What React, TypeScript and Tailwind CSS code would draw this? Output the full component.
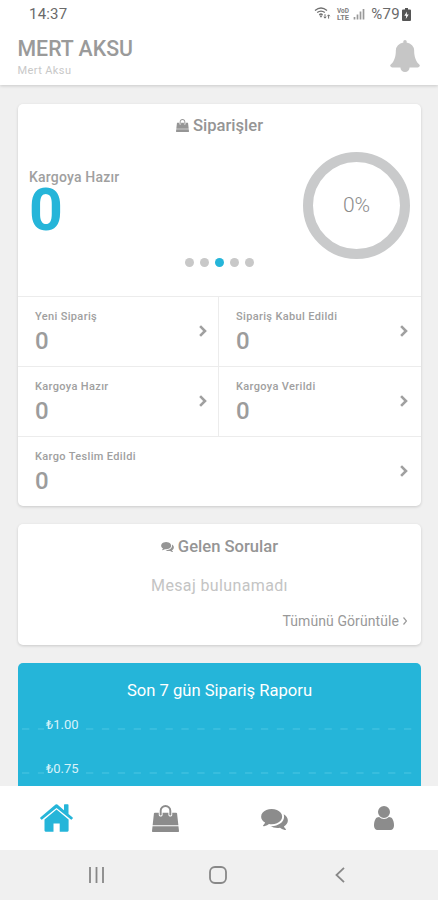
import type { ReactNode } from 'react';
import clsx from 'clsx';

const HomeIcon = ({ className }: { className?: string }) => (
  <svg viewBox="0 0 33 28" fill="currentColor" className={className}>
    <path d="M0.3 13.6 15.6 0.6Q16.5 0 17.4 0.6L24 6.2V1Q24 0.3 24.7 0.3H27.8Q28.5 0.3 28.5 1V10L32.7 13.6Q33 14 32.7 14.4L31.7 15.6Q31.3 15.9 30.9 15.6L16.5 3.9 2.1 15.6Q1.7 15.9 1.3 15.6L0.3 14.4Q0 14 0.3 13.6Z" />
    <path d="M16.5 5.4 28.6 15.4V26.6Q28.6 27.7 27.5 27.7H19.7V19.4H13.5V27.7H5.6Q4.5 27.7 4.5 26.6V15.4Z" />
  </svg>
);

const BagIcon = ({ className }: { className?: string }) => (
  <svg viewBox="0 0 1792 1792" fill="currentColor" className={className}>
    <path d="M1757 1408l35 313q3 28-16 50-19 21-48 21h-1664q-29 0-48-21-19-22-16-50l35-313h1722zm-93-839l86 775h-1708l86-775q3-24 21-40.5t43-16.5h256v128q0 53 37.5 90.5t90.5 37.5 90.5-37.5 37.5-90.5v-128h384v128q0 53 37.5 90.5t90.5 37.5 90.5-37.5 37.5-90.5v-128h256q25 0 43 16.5t21 40.5zm-384-185v256q0 26-19 45t-45 19-45-19-19-45v-256q0-106-75-181t-181-75-181 75-75 181v256q0 26-19 45t-45 19-45-19-19-45v-256q0-159 112.5-271.5t271.5-112.5 271.5 112.5 112.5 271.5z" />
  </svg>
);

const CommentsIcon = ({ className }: { className?: string }) => (
  <svg viewBox="0 256 1792 1408" fill="currentColor" className={className}>
    <path d="M1408 768q0 139-94 257t-256.5 186.5-353.5 68.5q-86 0-176-16-124 88-278 128-36 9-86 16h-3q-11 0-20.5-8t-11.5-21q-1-3-1-6.5t.5-6.5 2-6l2.5-5 3.5-5.5 4-5 4.5-5 4-4.5q5-6 23-25t26-29.5 22.5-29 25-38.5 20.5-44q-124-72-195-177t-71-224q0-139 94-257t256.5-186.5 353.5-68.5 353.5 68.5 256.5 186.5 94 257zm384 256q0 120-71 224.5t-195 176.5q10 24 20.5 44t25 38.5 22.5 29 26 29.5 23 25q1 1 4 4.5t4.5 5 4 5 3.5 5.5l2.5 5 2 6 .5 6.5-1 6.5q-3 14-13 22t-22 7q-50-7-86-16-154-40-278-128-90 16-176 16-271 0-472-132 58 4 88 4 161 0 309-45t264-129q125-92 192-212t67-254q0-77-23-152 129 71 204 178t75 230z" />
  </svg>
);

const UserIcon = ({ className }: { className?: string }) => (
  <svg viewBox="256 128 1280 1536" fill="currentColor" className={className}>
    <path d="M1536 1399q0 109-62.5 187t-150.5 78h-854q-88 0-150.5-78t-62.5-187q0-85 8.5-160.5t31.5-152 58.5-131 94-89 134.5-34.5q131 128 313 128t313-128q76 0 134.5 34.5t94 89 58.5 131 31.5 152 8.5 160.5zm-256-887q0 159-112.5 271.5t-271.5 112.5-271.5-112.5-112.5-271.5 112.5-271.5 271.5-112.5 271.5 112.5 112.5 271.5z" />
  </svg>
);

const BellIcon = ({ className }: { className?: string }) => (
  <svg viewBox="64 0 1664 1792" fill="currentColor" className={className}>
    <path d="M1728 1408q0 52-38 90t-90 38h-448q0 106-75 181t-181 75-181-75-75-181h-448q-52 0-90-38t-38-90q50-42 91-88t85-119.5 74.5-158.5 50-206 19.5-260q0-152 117-282.5t307-158.5q-8-19-8-39 0-40 28-68t68-28 68 28 28 68q0 20-8 39 190 28 307 158.5t117 282.5q0 139 19.5 260t50 206 74.5 158.5 85 119.5 91 88z" />
  </svg>
);

const ChevronIcon = () => (
  <svg viewBox="0 0 8 12" fill="none" stroke="currentColor" strokeWidth="2.6" className="mt-0.5 h-3 w-2 text-[#a0a0a0]">
    <path d="M1.1 1.1 6 6 1.1 10.9" />
  </svg>
);

const StatusIcons = () => (
  <svg viewBox="0 0 52 14" className="h-3.5 w-[52px]" fill="none" stroke="#6f6f6f">
    {/* wifi */}
    <path d="M1 3.4Q7 -1.4 13 3.4M3.2 5.6Q7 2.6 10.8 5.6M5.2 7.7Q7 6.2 8.6 7.7" strokeWidth="1.3" />
    <path d="M7 10.8 5.4 8.4H8.6Z" fill="#6f6f6f" stroke="none" />
    <path d="M11 7.2V11M9.8 9.8 11 11.2 12.2 9.8M14.6 11.6V8M13.4 9.2 14.6 7.8 15.8 9.2" strokeWidth="1" />
    {/* volte */}
    <g fill="#808080" stroke="none" fontFamily="Roboto, sans-serif" fontSize="6.5" fontWeight="700">
      <text x="23" y="6" textLength="12" lengthAdjust="spacingAndGlyphs">VoD</text>
      <text x="23" y="12.6" textLength="12" lengthAdjust="spacingAndGlyphs">LTE</text>
    </g>
    {/* signal */}
    <path d="M40.5 12.5V10M43.5 12.5V7.5M46.5 12.5V4.5M49.5 12.5V2" stroke="#999999" strokeWidth="1.7" />
  </svg>
);

const BatteryIcon = () => (
  <svg viewBox="0 0 9 13" className="ml-[2px] h-[13px] w-[9px]">
    <path d="M3 0H6V1.5H8Q9 1.5 9 2.5V12Q9 13 8 13H1Q0 13 0 12V2.5Q0 1.5 1 1.5H3Z" fill="#555555" />
    <path d="M5 3.5 2.3 7.7H4.2L3.8 11 6.7 6.6H4.7Z" fill="#ffffff" />
  </svg>
);

interface CellProps {
  label: string;
  value: number;
  className?: string;
}

const OrderCell = ({ label, value, className }: CellProps) => (
  <div className={clsx('flex h-[70px] items-center justify-between border-t border-[#ececec] pb-0.5 pl-[17px]', className)}>
    <div>
      <p className="mt-[3px] text-[11px] leading-4 font-medium tracking-[0.35px] text-[#a0a0a0]">{label}</p>
      <p className="mt-0.5 text-[24px] leading-7 font-medium text-[#9c9c9c]">{value}</p>
    </div>
    <ChevronIcon />
  </div>
);

const CardTitle = ({ children }: { children: ReactNode }) => (
  <h2 className="flex items-center justify-center gap-1 text-[16.6px] leading-5 font-medium text-[#959595]">{children}</h2>
);

const gridLines = [
  { label: '₺1.00', y: 66 },
  { label: '₺0.75', y: 110 },
];

export default function App() {
  return (
    <div className="flex h-[900px] w-[438px] flex-col overflow-hidden bg-[#f0f0f0] font-['Roboto','Noto_Sans',sans-serif]">
      {/* Header */}
      <header className="z-10 h-[85px] shrink-0 bg-white shadow-[0_1px_3px_rgba(0,0,0,0.16)]">
        <div className="flex h-7 items-center justify-between pr-[27px] pl-[29px] text-[#6a6a6a]">
          <span className="text-[15px] tracking-[0.2px]">14:37</span>
          <div className="flex items-center">
            <StatusIcons />
            <span className="ml-[5px] text-[15px] tracking-[0.3px]">%79</span>
            <BatteryIcon />
          </div>
        </div>
        <div className="flex items-start justify-between pr-[18px] pl-[17.5px]">
          <div className="pt-[9px]">
            <h1 className="text-[21.3px] leading-6 font-medium text-[#9a9a9a]">MERT AKSU</h1>
            <p className="mt-0.5 text-[11px] leading-4 tracking-[0.4px] text-[#c8c8c8]">Mert Aksu</p>
          </div>
          <BellIcon className="mt-3 h-8 w-[30px] text-[#c6c6c6]" />
        </div>
      </header>

      <main className="flex min-h-0 flex-1 flex-col gap-[18px] overflow-hidden px-[18px] pt-[18.5px] *:shrink-0">
        {/* Orders */}
        <section className="h-[402px] w-[403px] rounded-[5px] bg-white shadow-[0_1px_3px_rgba(0,0,0,0.16)]">
          <div className="flex h-48 flex-col pt-3">
            <CardTitle>
              <BagIcon className="h-[13px] w-[13px]" />
              Siparişler
            </CardTitle>
            <div className="mt-4 flex justify-between px-[11px]">
              <div className="pt-4">
                <p className="text-sm leading-[18px] font-medium tracking-[0.2px] text-[#a0a0a0]">Kargoya Hazır</p>
                <p className="text-[59px] leading-[48px] font-bold text-[#25b5d9]">0</p>
              </div>
              <div className="flex h-[107px] w-[107px] items-center justify-center rounded-full border-[10px] border-[#c9cacb] pt-0.5 text-[21px] font-light text-[#8c8c8c]">
                0%
              </div>
            </div>
            <div className="-mt-[1px] flex justify-center gap-[6px]">
              {[0, 1, 2, 3, 4].map((dot) => (
                <span key={dot} className={clsx('h-[9px] w-[9px] rounded-full', dot === 2 ? 'bg-[#25b5d9]' : 'bg-[#c8c8c8]')} />
              ))}
            </div>
          </div>
          <div className="grid grid-cols-[201px_202px]">
            <OrderCell label="Yeni Sipariş" value={0} className="border-r pr-[11px]" />
            <OrderCell label="Sipariş Kabul Edildi" value={0} className="pr-[13px]" />
            <OrderCell label="Kargoya Hazır" value={0} className="border-r pr-[11px]" />
            <OrderCell label="Kargoya Verildi" value={0} className="pr-[13px]" />
            <OrderCell label="Kargo Teslim Edildi" value={0} className="col-span-2 pr-[13px]" />
          </div>
        </section>

        {/* Questions */}
        <section className="h-[121px] w-[403px] rounded-[5px] bg-white pt-[13px] shadow-[0_1px_3px_rgba(0,0,0,0.16)]">
          <CardTitle>
            <CommentsIcon className="h-[10px] w-[13px]" />
            Gelen Sorular
          </CardTitle>
          <p className="mt-[17px] text-center text-base leading-6 tracking-[0.37px] text-[#c4c4c4]">Mesaj bulunamadı</p>
          <div className="mt-[13px] flex items-center justify-end gap-1 pr-[14px] text-sm leading-5 tracking-[0.08px] text-[#999999]">
            Tümünü Görüntüle
            <svg viewBox="0 0 4 8" className="h-2 w-1" fill="none" stroke="currentColor" strokeWidth="1.2">
              <path d="M0.5 0.5 3.5 4 0.5 7.5" />
            </svg>
          </div>
        </section>

        {/* Report */}
        <section className="h-[260px] w-[403px] rounded-[5px] bg-[#25b5d9] pt-[18px] text-white">
          <h2 className="text-center text-[16.6px] leading-5">Son 7 gün Sipariş Raporu</h2>
          <svg viewBox="0 38 403 120" className="h-[120px] w-[403px]">
            {gridLines.map(({ label, y }) => (
              <g key={label}>
                <path d={`M4 ${y}H26M68 ${y}H398`} stroke="#4cc6e3" strokeDasharray="7.3 8.6" />
                <text x="28" y={y} fill="#d8f2f9" fontSize="13">{label}</text>
              </g>
            ))}
          </svg>
        </section>
      </main>

      {/* Tab bar */}
      <nav className="grid h-16 shrink-0 grid-cols-4 place-items-center bg-white pl-0.5 text-[#8c8c8c]">
        <HomeIcon className="h-7 w-[33px] text-[#25b5d9]" />
        <BagIcon className="h-[27px] w-[27px]" />
        <CommentsIcon className="mt-0.5 h-[21px] w-[27px]" />
        <UserIcon className="h-6 w-5" />
      </nav>

      {/* System navigation */}
      <div className="grid h-[50px] shrink-0 grid-cols-[122px_122px_122px] place-items-center bg-[#f0f0f0] pb-px pl-[35px] text-[#888888]">
        <svg viewBox="0 0 17 16" className="h-4 w-[17px]" stroke="currentColor" strokeWidth="1.8">
          <path d="M2 0V16M8.5 0V16M15 0V16" />
        </svg>
        <svg viewBox="0 0 18 18" className="h-[18px] w-[18px]" fill="none" stroke="currentColor" strokeWidth="1.8">
          <rect x="1" y="1" width="16" height="16" rx="5" />
        </svg>
        <svg viewBox="0 0 10 16" className="h-4 w-2.5" fill="none" stroke="currentColor" strokeWidth="1.8">
          <path d="M9 0.8 1.5 8 9 15.2" />
        </svg>
      </div>
    </div>
  );
}
